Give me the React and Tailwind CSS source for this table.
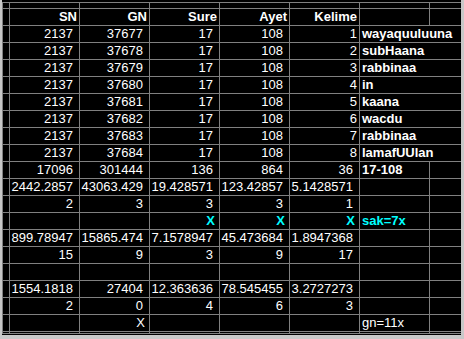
import React from "react";

const C = "cyan";
const rows = [
  // [cells for cols SN, GN, Sure, Ayet, Kelime], word, type
  { t: "h", v: ["SN", "GN", "Sure", "Ayet", "Kelime"] },
  { v: ["2137", "37677", "17", "108", "1"], w: "wayaquuluuna", k: true },
  { v: ["2137", "37678", "17", "108", "2"], w: "subHaana", k: true },
  { v: ["2137", "37679", "17", "108", "3"], w: "rabbinaa", k: true },
  { v: ["2137", "37680", "17", "108", "4"], w: "in", k: true },
  { v: ["2137", "37681", "17", "108", "5"], w: "kaana", k: true },
  { v: ["2137", "37682", "17", "108", "6"], w: "wacdu", k: true },
  { v: ["2137", "37683", "17", "108", "7"], w: "rabbinaa", k: true },
  { v: ["2137", "37684", "17", "108", "8"], w: "lamafUUlan", k: true },
  { v: ["17096", "301444", "136", "864", "36"], w2: "17-108" },
  { v: ["2442.2857", "43063.429", "19.428571", "123.42857", "5.1428571"] },
  { v: ["2", "3", "3", "3", "1"] },
  { v: ["", "", "X", "X", "X"], x: true, w3: "sak=7x" },
  { v: ["899.78947", "15865.474", "7.1578947", "45.473684", "1.8947368"] },
  { v: ["15", "9", "3", "9", "17"] },
  { v: ["", "", "", "", ""] },
  { v: ["1554.1818", "27404", "12.363636", "78.545455", "3.2727273"] },
  { v: ["2", "0", "4", "6", "3"] },
  { v: ["", "X", "", "", ""], w4: "gn=11x" },
  { t: "p", v: ["", "", "", "", ""] },
];

function Cell({ children, className = "" }) {
  return (
    <div className={"bg-black whitespace-nowrap text-[13px] leading-[16px] " + className}>
      {children}
    </div>
  );
}

export default function App() {
  return (
    <div className="w-[464px] h-[339px] bg-[#c8c8c8] pl-[2px] pr-[3px] pb-[4px] flex font-['Liberation_Sans',Arial,sans-serif] text-white overflow-hidden">
      <div className="flex-1 bg-black pt-[2px] overflow-hidden">
        <div className="grid grid-cols-[6px_repeat(6,69px)_1fr] grid-rows-[5px_repeat(19,16px)_1px] gap-px bg-[#808080] pl-px pt-px pb-px">
          {/* top strip */}
          <Cell />
          <Cell />
          <Cell />
          <Cell />
          <Cell />
          <Cell />
          <Cell />
          <Cell />
          {rows.map((r, i) => {
            const out = [<Cell key={"a" + i} />];
            if (r.t === "h") {
              r.v.forEach((s, j) =>
                out.push(
                  <Cell key={i + "-" + j} className="text-right pr-[2px] font-bold">
                    {s}
                  </Cell>
                )
              );
              out.push(<Cell key={i + "w"} />, <Cell key={i + "z"} />);
              return out;
            }
            r.v.forEach((s, j) => {
              let cls = "text-right pr-[6px]";
              if (r.k && j === 4) cls = "text-right pr-[2px]";
              if (s === "X" && r.x) cls = "text-right pr-[4px] font-bold text-[#00ffff]";
              if (s === "X" && !r.x) cls = "text-right pr-[4px]";
              out.push(
                <Cell key={i + "-" + j} className={cls}>
                  {s}
                </Cell>
              );
            });
            if (r.k) {
              out.push(
                <Cell key={i + "w"} className="col-span-2 pl-[2px] font-bold">
                  {r.w}
                </Cell>
              );
            } else {
              let w = null;
              let cls = "pl-[2px]";
              if (r.w2) {
                w = r.w2;
                cls += " font-bold";
              }
              if (r.w3) {
                w = r.w3;
                cls += " font-bold text-[#00ffff]";
              }
              if (r.w4) w = r.w4;
              out.push(
                <Cell key={i + "w"} className={cls}>
                  {w}
                </Cell>,
                <Cell key={i + "z"} />
              );
            }
            return out;
          })}
        </div>
      </div>
    </div>
  );
}
